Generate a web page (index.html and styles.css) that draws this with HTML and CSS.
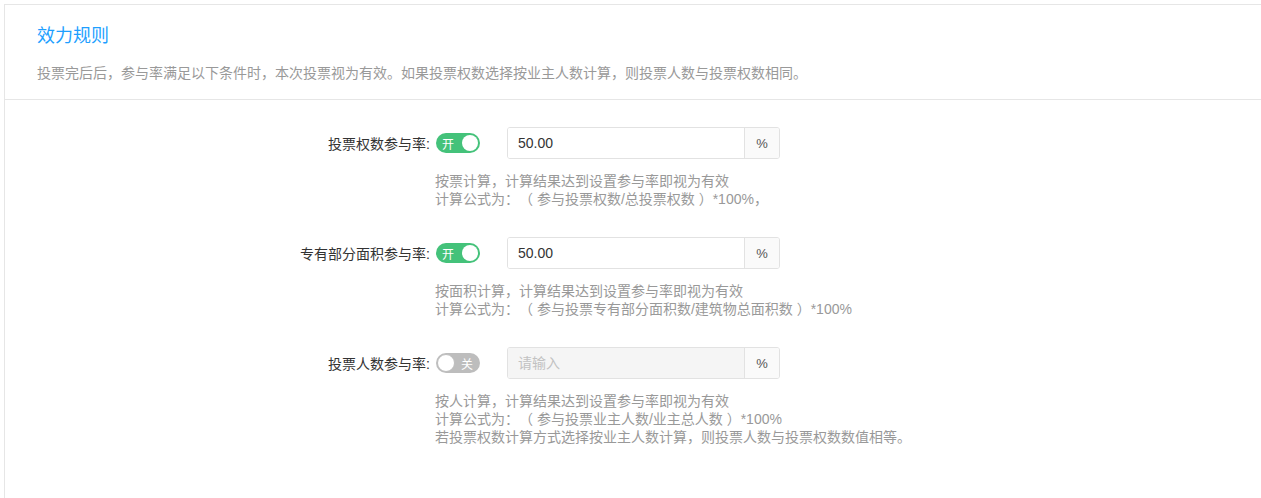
FILE: index.html
```html
<!DOCTYPE html>
<html lang="zh-CN">
<head>
  <meta charset="UTF-8" />
  <title>效力规则</title>
  <link rel="stylesheet" href="styles.css">
</head>
<body>
  <div class="card">
    <div class="card-header">
      <h2>效力规则</h2>
      <p class="desc">投票完后后，参与率满足以下条件时，本次投票视为有效。如果投票权数选择按业主人数计算，则投票人数与投票权数相同。</p>
    </div>

    <div class="card-body">
      <div class="rule">
        <div class="rule-line">
          <label>投票权数参与率:</label>
          <span class="switch on"><em>开</em><i></i></span>
          <div class="input-group">
            <input type="text" value="50.00">
            <span class="addon">%</span>
          </div>
        </div>
        <div class="help">
          按票计算，计算结果达到设置参与率即视为有效<br>
          计算公式为：（ 参与投票权数/总投票权数 ）*100%，
        </div>
      </div>

      <div class="rule">
        <div class="rule-line">
          <label>专有部分面积参与率:</label>
          <span class="switch on"><em>开</em><i></i></span>
          <div class="input-group">
            <input type="text" value="50.00">
            <span class="addon">%</span>
          </div>
        </div>
        <div class="help">
          按面积计算，计算结果达到设置参与率即视为有效<br>
          计算公式为：（ 参与投票专有部分面积数/建筑物总面积数 ）*100%
        </div>
      </div>

      <div class="rule">
        <div class="rule-line">
          <label>投票人数参与率:</label>
          <span class="switch"><i></i><em>关</em></span>
          <div class="input-group">
            <input type="text" placeholder="请输入" disabled>
            <span class="addon">%</span>
          </div>
        </div>
        <div class="help">
          按人计算，计算结果达到设置参与率即视为有效<br>
          计算公式为：（ 参与投票业主人数/业主总人数 ）*100%<br>
          若投票权数计算方式选择按业主人数计算，则投票人数与投票权数数值相等。
        </div>
      </div>
    </div>
  </div>
</body>
</html>
```

FILE: styles.css
```css
body {
  margin: 0;
  font-family: "Liberation Sans", "Noto Sans CJK SC", sans-serif;
  color: #333;
  background: #fff;
  text-spacing-trim: space-all;
}
.card {
  margin: 4px 0 0 4px;
  min-height: 494px;
  box-sizing: border-box;
  border-top: 1px solid #e6e6e6;
  border-left: 1px solid #e6e6e6;
}
.card-header {
  padding: 19px 32px 0;
  height: 95px;
  box-sizing: border-box;
  border-bottom: 1px solid #e6e6e6;
}
h2 {
  margin: 0;
  font-size: 18px;
  font-weight: normal;
  line-height: 24px;
  color: #1e9fff;
}
.desc {
  margin: 15px 0 0;
  font-size: 14px;
  line-height: 20px;
  color: #999;
}
.card-body {
  padding-top: 27px;
}
.rule {
  margin-bottom: 29px;
}
.rule-line {
  display: flex;
  align-items: center;
  height: 32px;
}
.rule-line label {
  width: 425px;
  text-align: right;
  font-size: 14px;
  color: #333;
  padding-right: 6px;
}
.switch {
  display: flex;
  align-items: center;
  box-sizing: border-box;
  width: 44px;
  height: 20px;
  border-radius: 10px;
  padding: 0 2px 0 6px;
  justify-content: space-between;
  background: #44c27a;
}
.switch em {
  font-style: normal;
  font-size: 12px;
  color: #fff;
}
.switch i {
  width: 16px;
  height: 16px;
  border-radius: 50%;
  background: #fff;
}
.switch:not(.on) {
  background: #bdbdbd;
  padding: 0 7px 0 1px;
}
.switch:not(.on) i {
  width: 16px;
  height: 16px;
  border: 1px solid #bdbdbd;
}
.input-group {
  display: flex;
  margin-left: 27px;
  width: 273px;
  height: 32px;
  box-sizing: border-box;
  border: 1px solid #e2e2e2;
  border-radius: 3px;
  overflow: hidden;
}
.input-group input {
  flex: 1;
  min-width: 0;
  border: none;
  padding: 0 10px;
  font-family: inherit;
  font-size: 14px;
  color: #333;
  outline: none;
  background: #fff;
}
.input-group input:disabled {
  background: #f5f5f5;
}
.input-group input::placeholder {
  color: #c2c2c2;
}
.addon {
  width: 34px;
  display: flex;
  align-items: center;
  justify-content: center;
  border-left: 1px solid #e2e2e2;
  background: #fafafa;
  font-size: 13px;
  color: #555;
}
.help {
  margin: 13px 0 0 430px;
  font-size: 14px;
  line-height: 18px;
  color: #999;
}
```
